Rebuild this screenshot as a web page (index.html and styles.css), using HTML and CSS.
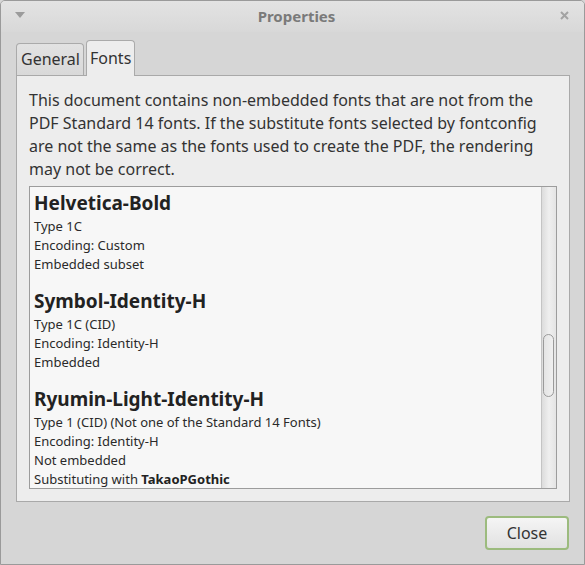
FILE: index.html
```html
<!DOCTYPE html>
<html>
<head>
<meta charset="utf-8">
<link rel="stylesheet" href="styles.css">
</head>
<body>
<div class="window">
  <div class="titlebar">
    <svg class="menu-icon" width="10" height="6" viewBox="0 0 10 6"><path d="M0 0 L10 0 L5 6 Z" fill="#9b9b9b"/></svg>
    <span class="title">Properties</span>
    <svg class="close-icon" width="9" height="9" viewBox="0 0 9 9"><path d="M1 1 L8 8 M8 1 L1 8" stroke="#a3a3a3" stroke-width="2"/></svg>
  </div>
  <div class="body">
    <div class="tabs">
      <div class="tab">General</div>
      <div class="tab active">Fonts</div>
    </div>
    <div class="panel">
      <p class="intro">This document contains non-embedded fonts that are not from the PDF Standard 14 fonts. If the substitute fonts selected by fontconfig are not the same as the fonts used to create the PDF, the rendering may not be correct.</p>
      <div class="list">
        <div class="list-content">
          <div class="font">
            <div class="font-name">Helvetica-Bold</div>
            <div class="line">Type 1C</div>
            <div class="line">Encoding: Custom</div>
            <div class="line">Embedded subset</div>
          </div>
          <div class="font">
            <div class="font-name">Symbol-Identity-H</div>
            <div class="line">Type 1C (CID)</div>
            <div class="line">Encoding: Identity-H</div>
            <div class="line">Embedded</div>
          </div>
          <div class="font">
            <div class="font-name">Ryumin-Light-Identity-H</div>
            <div class="line">Type 1 (CID) (Not one of the Standard 14 Fonts)</div>
            <div class="line">Encoding: Identity-H</div>
            <div class="line">Not embedded</div>
            <div class="line">Substituting with <b>TakaoPGothic</b></div>
          </div>
        </div>
        <div class="scrollbar"><div class="thumb"></div></div>
      </div>
    </div>
    <div class="actions">
      <button class="btn">Close</button>
    </div>
  </div>
</div>
</body>
</html>
```

FILE: styles.css
```css
* { box-sizing: border-box; }
html, body { margin: 0; padding: 0; }
body {
  font-family: "Noto Sans", "DejaVu Sans", sans-serif;
  background: #d6d6d6;
}
.window {
  width: 585px;
  height: 565px;
  border: 1px solid #9a9a9a;
  border-radius: 5px 5px 0 0;
  background: #d6d6d6;
  display: flex;
  flex-direction: column;
  overflow: hidden;
}
.titlebar {
  height: 31px;
  flex: none;
  display: flex;
  align-items: center;
  justify-content: space-between;
  padding: 0 15px 2px 14px;
  background: linear-gradient(#e3e3e3, #d8d8d8);
}
.menu-icon { margin-top: -2px; }
.title {
  font-size: 15px;
  font-weight: bold;
  color: #7a7a7a;
  margin-left: 8px;
}
.close-icon { margin-top: 0; }
.body {
  flex: 1;
  min-height: 0;
  display: flex;
  flex-direction: column;
  padding: 8px 14px 14px 15px;
}
.tabs {
  display: flex;
  align-items: flex-end;
  gap: 2px;
  height: 35px;
  flex: none;
}
.tab {
  height: 32px;
  padding: 0 3px 1px 4px;
  display: flex;
  align-items: center;
  font-size: 16px;
  color: #333;
  background: linear-gradient(#e2e2e2, #d9d9d9);
  border: 1px solid #aaaaaa;
  border-bottom: none;
  border-radius: 4px 4px 0 0;
}
.tab.active {
  height: 36px;
  margin-bottom: -1px;
  background: #ededed;
  position: relative;
  z-index: 1;
  padding: 0 3px 1px 3px;
}
.panel {
  flex: 1;
  min-height: 0;
  display: flex;
  flex-direction: column;
  background: #ededed;
  border: 1px solid #a9a9a9;
  padding: 13px 12px 12px 12px;
}
.intro {
  margin: 0;
  font-size: 16px;
  line-height: 23px;
  color: #333;
  flex: none;
}
.list {
  flex: 1;
  min-height: 0;
  margin-top: 5px;
  display: flex;
  border: 1px solid #9c9c9c;
  background: #f7f7f7;
  overflow: hidden;
}
.list-content {
  flex: 1;
  overflow: hidden;
  padding: 3px 0 0 4px;
  color: #2a2a2a;
}
.font { margin-bottom: 14px; }
.font-name {
  font-size: 19px;
  font-weight: bold;
  line-height: 27px;
  color: #222;
}
.line {
  font-size: 13px;
  line-height: 19px;
}
.line b { color: #222; }
.scrollbar {
  width: 15px;
  flex: none;
  border-left: 1px solid #c4c4c4;
  background: linear-gradient(90deg, #dcdcdc, #efefef 50%, #e4e4e4);
  padding: 147px 0 0 1px;
}
.thumb {
  width: 11px;
  height: 63px;
  border: 1px solid #9a9a9a;
  border-radius: 6px;
  background: linear-gradient(90deg, #e4e4e4, #f0f0f0);
}
.actions {
  flex: none;
  display: flex;
  justify-content: flex-end;
  margin-top: 14px;
}
.btn {
  width: 84px;
  height: 34px;
  font-family: "Noto Sans", "DejaVu Sans", sans-serif;
  font-size: 16px;
  color: #333;
  border: 2px solid #9cbb7e;
  border-radius: 4px;
  background: linear-gradient(#f5f5f5, #e1e1e1);
  padding: 0;
  margin-right: 1px;
}
```
